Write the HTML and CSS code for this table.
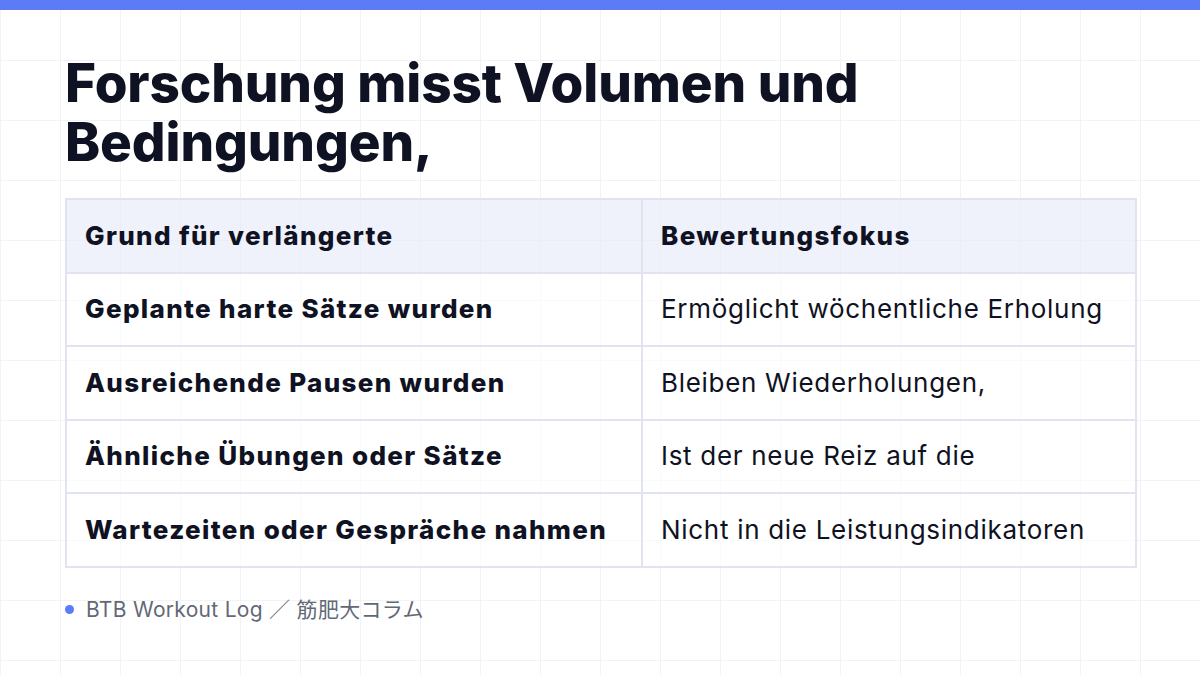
FILE: index.html
```html
<!DOCTYPE html>
<html lang="de">
<head>
<meta charset="utf-8">
<title>Forschung misst Volumen und Bedingungen</title>
<link rel="stylesheet" href="styles.css">
</head>
<body>
<div class="slide">
  <div class="topbar"></div>
  <main class="content">
    <h1 class="title">Forschung misst Volumen und<br>Bedingungen,</h1>
    <table class="table">
      <colgroup><col class="c1"><col class="c2"></colgroup>
      <thead>
        <tr><th>Grund für verlängerte</th><th>Bewertungsfokus</th></tr>
      </thead>
      <tbody>
        <tr><td class="k">Geplante harte Sätze wurden</td><td>Ermöglicht wöchentliche Erholung</td></tr>
        <tr><td class="k">Ausreichende Pausen wurden</td><td>Bleiben Wiederholungen,</td></tr>
        <tr><td class="k">Ähnliche Übungen oder Sätze</td><td>Ist der neue Reiz auf die</td></tr>
        <tr><td class="k">Wartezeiten oder Gespräche nahmen</td><td>Nicht in die Leistungsindikatoren</td></tr>
      </tbody>
    </table>
    <footer class="footer"><span class="dot"></span><span class="src">BTB Workout Log ／ 筋肥大コラム</span></footer>
  </main>
</div>
</body>
</html>
```
FILE: styles.css
```css
* { box-sizing: border-box; }
html, body { margin: 0; padding: 0; }
body {
  width: 1200px;
  height: 675px;
  overflow: hidden;
  background-color: #ffffff;
  background-image:
    linear-gradient(to right, #f2f3f7 1px, transparent 1px),
    linear-gradient(to bottom, #f2f3f7 1px, transparent 1px);
  background-size: 60px 60px;
  background-position: 0 0;
  font-family: Inter, "Noto Sans CJK JP", sans-serif;
  color: #0f1222;
}
.slide { width: 1200px; height: 675px; display: flex; flex-direction: column; }
.topbar { height: 10px; background: #5b7cf6; flex: none; }
.content { padding: 44px 65px 0; display: flex; flex-direction: column; }
.title {
  margin: 0;
  font-size: 53px;
  line-height: 59px;
  font-weight: 800;
  letter-spacing: -0.1px;
  color: #0f1222;
}
.table {
  margin-top: 26px;
  width: 1070px;
  border-collapse: collapse;
  border: 2px solid #e1e4f0;
  table-layout: fixed;
}
.c1 { width: 576px; }
.c2 { width: 494px; }
.table th, .table td {
  border: 2px solid #e1e4f0;
  padding: 0 18px;
  height: 73.5px;
  font-size: 26px;
  line-height: 30px;
  text-align: left;
  vertical-align: middle;
  white-space: nowrap;
}
.table th { background: rgba(232, 235, 249, 0.7); font-weight: 800; letter-spacing: 1.35px; }
.table td { font-weight: 400; letter-spacing: 0.7px; background: rgba(255,255,255,0.55); }
.table td.k { font-weight: 800; letter-spacing: 1.35px; }
.footer {
  margin-top: 28px;
  display: flex;
  align-items: center;
  gap: 12px;
  font-size: 21px;
  letter-spacing: 0.3px;
  color: #636877;
}
.dot { width: 9px; height: 9px; border-radius: 50%; background: #5b7cf6; flex: none; }
.src { line-height: 28px; }
```
